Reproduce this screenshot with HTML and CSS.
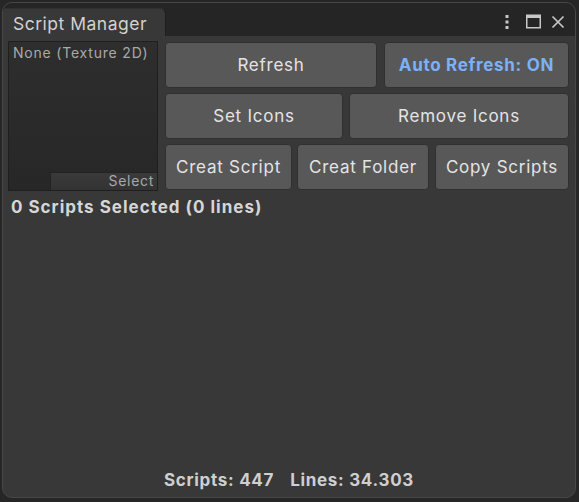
FILE: index.html
```html
<!DOCTYPE html>
<html>
<head>
<meta charset="utf-8">
<link rel="stylesheet" href="styles.css">
</head>
<body>
<div class="window">
  <div class="tabbar">
    <div class="tab">Script Manager</div>
    <div class="tools">
      <svg class="ico kebab" width="8" height="16" viewBox="0 0 8 16"><rect x="2.5" y="1" width="3" height="3" fill="#c8c8c8"/><rect x="2.5" y="6.5" width="3" height="3" fill="#c8c8c8"/><rect x="2.5" y="12" width="3" height="3" fill="#c8c8c8"/></svg>
      <svg class="ico maxi" width="15" height="15" viewBox="0 0 15 15"><rect x="0.75" y="1.25" width="13.5" height="12.5" fill="none" stroke="#c8c8c8" stroke-width="1.5"/><rect x="0.5" y="1" width="14" height="3" fill="#c8c8c8"/></svg>
      <svg class="ico close" width="14" height="14" viewBox="0 0 14 14"><path d="M1.5 1.5 L12.5 12.5 M12.5 1.5 L1.5 12.5" stroke="#c8c8c8" stroke-width="1.7"/></svg>
    </div>
  </div>
  <div class="content">
    <div class="top">
      <div class="objfield">
        <div class="objlabel">None (Texture 2D)</div>
        <div class="selectbtn">Select</div>
      </div>
      <div class="buttons">
        <div class="row g7">
          <div class="btn w212">Refresh</div>
          <div class="btn w185 on">Auto Refresh: ON</div>
        </div>
        <div class="row g6">
          <div class="btn w178">Set Icons</div>
          <div class="btn w220">Remove Icons</div>
        </div>
        <div class="row g6">
          <div class="btn w127">Creat Script</div>
          <div class="btn w132">Creat Folder</div>
          <div class="btn w134">Copy Scripts</div>
        </div>
      </div>
    </div>
    <div class="selected">0 Scripts Selected (0 lines)</div>
    <div class="footer"><span>Scripts: 447</span><span>Lines: 34.303</span></div>
  </div>
</div>
</body>
</html>
```
FILE: styles.css
```css
html, body {
  margin: 0;
  padding: 0;
  background: #262626;
  width: 579px;
  height: 502px;
  overflow: hidden;
}
body {
  font-family: Inter, "Noto Sans", sans-serif;
}
.window {
  margin: 2px 0 0 2px;
  width: 572px;
  height: 494px;
  border: 1px solid #474747;
  border-radius: 10px;
  overflow: hidden;
  display: flex;
  flex-direction: column;
  background: #383838;
}
.tabbar {
  height: 33px;
  background: #252525;
  display: flex;
  align-items: flex-end;
  justify-content: space-between;
}
.tab {
  height: 28px;
  width: 163px;
  box-sizing: border-box;
  background: #383838;
  border-top-right-radius: 6px;
  border-top: 1px solid #303030;
  border-right: 1px solid #1f1f1f;
  color: #d2d2d2;
  font-size: 17.5px;
  letter-spacing: 0.5px;
  line-height: 29px;
  padding-left: 10px;
}
.tools {
  align-self: center;
  display: flex;
  align-items: center;
  padding-right: 10px;
  margin-top: 4px;
}
.ico { display: block; }
.maxi { margin-left: 15px; }
.close { margin-left: 10px; }
.content {
  flex: 1;
  display: flex;
  flex-direction: column;
  padding: 5px 0 0 5px;
}
.top {
  display: flex;
  gap: 7px;
}
.objfield {
  width: 150px;
  height: 150px;
  box-sizing: border-box;
  border: 1px solid #1f1f1f;
  background: linear-gradient(#2e2e2e, #272727);
  display: flex;
  flex-direction: column;
  justify-content: space-between;
}
.objlabel {
  color: #a9a9a9;
  font-size: 14px;
  letter-spacing: 0.8px;
  padding: 2px 0 0 4px;
}
.selectbtn {
  align-self: flex-end;
  width: 107px;
  height: 18px;
  box-sizing: border-box;
  background: linear-gradient(#3a3a3a, #333333);
  border-top: 1px solid #222;
  border-left: 1px solid #222;
  color: #a8a8a8;
  font-size: 14px;
  letter-spacing: 0.7px;
  line-height: 16px;
  text-align: right;
  padding-right: 3px;
}
.buttons {
  display: flex;
  flex-direction: column;
  gap: 5px;
  margin-top: 1px;
}
.row { display: flex; }
.g7 { gap: 7px; }
.g6 { gap: 6px; }
.btn {
  height: 46px;
  box-sizing: border-box;
  background: #585858;
  border: 1px solid #303030;
  border-radius: 4px;
  color: #e4e4e4;
  font-size: 17px;
  letter-spacing: 0.75px;
  display: flex;
  align-items: center;
  justify-content: center;
}
.btn.on {
  color: #7cb1f7;
  font-weight: 700;
  letter-spacing: 0.7px;
}
.w212 { width: 212px; }
.w185 { width: 185px; }
.w178 { width: 178px; }
.w220 { width: 220px; }
.w127 { width: 127px; }
.w132 { width: 132px; margin-left: -1px; }
.w134 { width: 134px; }
.selected {
  color: #d6d6d6;
  font-weight: 700;
  font-size: 17px;
  letter-spacing: 1px;
  margin: 6px 0 0 3px;
}
.footer {
  margin-top: auto;
  margin-bottom: 7px;
  display: flex;
  justify-content: center;
  gap: 16px;
  color: #cfcfcf;
  font-weight: 700;
  font-size: 17px;
  letter-spacing: 0.7px;
  padding-right: 5px;
}
```
